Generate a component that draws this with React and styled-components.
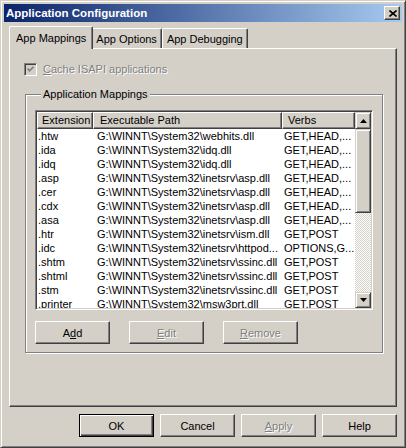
import React from "react";
import styled, { createGlobalStyle } from "styled-components";

const GlobalStyle = createGlobalStyle`
  html, body {
    margin: 0;
    padding: 0;
    background: #d4d0c8;
  }
  * {
    box-sizing: border-box;
  }
`;

const FONT = `"Liberation Sans", Arial, sans-serif`;
const COLUMNS = "56px 189px 73px";

const Window = styled.div`
  width: 406px;
  height: 448px;
  background: #d4d0c8;
  border: 1px solid;
  border-color: #d4d0c8 #404040 #404040 #d4d0c8;
  box-shadow: inset 1px 1px #fff, inset -1px -1px #808080;
  padding: 3px;
  display: flex;
  flex-direction: column;
  font-family: ${FONT};
  font-size: 11px;
  color: #000;
`;

const TitleBar = styled.div`
  height: 18px;
  flex: none;
  display: flex;
  align-items: center;
  justify-content: space-between;
  padding: 0 2px 0 2px;
  background: linear-gradient(to right, #0a246a, #a6caf0);
`;

const Title = styled.span`
  color: #fff;
  font-weight: bold;
  font-size: 11.5px;
  line-height: 14px;
  white-space: nowrap;
`;

const CloseButton = styled.div`
  width: 16px;
  height: 14px;
  background: #d4d0c8;
  border: 1px solid;
  border-color: #fff #404040 #404040 #fff;
  box-shadow: inset -1px -1px #808080;
  display: flex;
  align-items: center;
  justify-content: center;
  padding-left: 1px;
`;

const Body = styled.div`
  flex: 1;
  display: flex;
  flex-direction: column;
  padding: 4px 5px 7px 5px;
`;

const TabRow = styled.div`
  display: flex;
  align-items: flex-end;
  padding-left: 2px;
  height: 23px;
  position: relative;
  z-index: 1;
  margin-bottom: -1px;
`;

const Tab = styled.div`
  height: ${(p) => (p.$active ? "23px" : "20px")};
  margin: ${(p) => (p.$active ? "0 -2px" : "0 0 1px")};
  padding: ${(p) => (p.$active ? "5px 6px 0" : "4px 4px 0")};
  line-height: 13px;
  white-space: nowrap;
  background: #d4d0c8;
  border-top: 1px solid #fff;
  border-left: 1px solid #fff;
  border-right: 1px solid #404040;
  border-radius: 2px 2px 0 0;
  box-shadow: inset -1px 0 #808080;
  position: relative;
  z-index: ${(p) => (p.$active ? 2 : 1)};
`;

const Panel = styled.div`
  flex: 1;
  display: flex;
  flex-direction: column;
  border: 1px solid;
  border-color: #fff #404040 #404040 #fff;
  box-shadow: inset -1px -1px #808080;
  padding: 14px 13px 0 15px;
`;

const CheckRow = styled.label`
  display: flex;
  align-items: center;
  gap: 6px;
  height: 13px;
  margin-left: -1px;
`;

const CheckBox = styled.span`
  width: 13px;
  height: 13px;
  flex: none;
  background: #d4d0c8;
  border: 1px solid;
  border-color: #808080 #fff #fff #808080;
  box-shadow: inset 1px 1px #404040, inset -1px -1px #d4d0c8;
  display: flex;
  align-items: center;
  justify-content: center;
`;

const Disabled = styled.span`
  color: #808080;
  text-shadow: 1px 1px #fff;
  line-height: 13px;
`;

const Key = styled.span`
  text-decoration: underline;
`;

const GroupBox = styled.fieldset`
  margin: 12px 0 0;
  padding: 9px 9px 8px 9px;
  border: 1px solid #808080;
  box-shadow: inset 1px 1px #fff, 1px 1px #fff;
  min-width: 0;
`;

const Legend = styled.legend`
  margin-left: 6px;
  padding: 0 2px;
  line-height: 13px;
  background: #d4d0c8;
`;

const ListView = styled.div`
  height: 200px;
  display: flex;
  border: 1px solid;
  border-color: #808080 #fff #fff #808080;
  box-shadow: inset 1px 1px #404040, inset -1px -1px #d4d0c8;
  padding: 1px;
`;

const ListContent = styled.div`
  flex: 1;
  background: #fff;
  overflow: hidden;
  display: flex;
  flex-direction: column;
`;

const HeaderRow = styled.div`
  display: grid;
  grid-template-columns: ${COLUMNS};
  height: 17px;
  flex: none;
`;

const HeaderCell = styled.div`
  background: #d4d0c8;
  border: 1px solid;
  border-color: #fff #404040 #404040 #fff;
  box-shadow: inset -1px -1px #808080;
  padding-left: ${(p) => p.$pad}px;
  line-height: 14px;
  white-space: nowrap;
  overflow: hidden;
`;

const Row = styled.div`
  display: grid;
  grid-template-columns: ${COLUMNS};
  height: 14px;
  flex: none;
`;

const Cell = styled.div`
  padding-left: ${(p) => p.$pad}px;
  line-height: 14px;
  white-space: nowrap;
  overflow: hidden;
`;

const ScrollBar = styled.div`
  width: 16px;
  flex: none;
  display: flex;
  flex-direction: column;
`;

const ScrollButton = styled.div`
  height: ${(p) => p.$h}px;
  flex: none;
  background: #d4d0c8;
  border: 1px solid;
  border-color: #d4d0c8 #404040 #404040 #d4d0c8;
  box-shadow: inset 1px 1px #fff, inset -1px -1px #808080;
  display: flex;
  align-items: center;
  justify-content: center;
`;

const Track = styled.div`
  flex: 1;
  background-color: #d4d0c8;
  background-image: conic-gradient(#fff 25%, transparent 0 50%, #fff 0 75%, transparent 0);
  background-size: 2px 2px;
`;

const ButtonRow = styled.div`
  display: flex;
  gap: ${(p) => p.$gap}px;
  margin-top: ${(p) => p.$top || 0}px;
  justify-content: ${(p) => (p.$right ? "flex-end" : "flex-start")};
`;

const Button = styled.button`
  width: 75px;
  height: 23px;
  padding: 0;
  background: #d4d0c8;
  font-family: ${FONT};
  font-size: 11px;
  color: #000;
  border: 1px solid;
  border-color: ${(p) => (p.$default ? "#000" : "#fff #404040 #404040 #fff")};
  box-shadow: ${(p) =>
    p.$default
      ? "inset 1px 1px #fff, inset -1px -1px #404040, inset -2px -2px #808080"
      : "inset -1px -1px #808080"};
  ${(p) => p.disabled && "color: #808080; text-shadow: 1px 1px #fff;"}
`;

const Arrow = ({ down }) => (
  <svg width="7" height="4" viewBox="0 0 7 4">
    <polygon points={down ? "0,0 7,0 3.5,4" : "3.5,0 7,4 0,4"} fill="#000" />
  </svg>
);

const asp = "G:\\WINNT\\System32\\inetsrv\\asp.dll";
const ssinc = "G:\\WINNT\\System32\\inetsrv\\ssinc.dll";
const idq = "G:\\WINNT\\System32\\idq.dll";
const headVerbs = "GET,HEAD,...";

const mappings = [
  [".htw", "G:\\WINNT\\System32\\webhits.dll", headVerbs],
  [".ida", idq, headVerbs],
  [".idq", idq, headVerbs],
  [".asp", asp, headVerbs],
  [".cer", asp, headVerbs],
  [".cdx", asp, headVerbs],
  [".asa", asp, headVerbs],
  [".htr", "G:\\WINNT\\System32\\inetsrv\\ism.dll", "GET,POST"],
  [".idc", "G:\\WINNT\\System32\\inetsrv\\httpod...", "OPTIONS,G..."],
  [".shtm", ssinc, "GET,POST"],
  [".shtml", ssinc, "GET,POST"],
  [".stm", ssinc, "GET,POST"],
  [".printer", "G:\\WINNT\\System32\\msw3prt.dll", "GET,POST"],
];

export default function App() {
  return (
    <>
      <GlobalStyle />
      <Window>
        <TitleBar>
          <Title>Application Configuration</Title>
          <CloseButton>
            <svg width="8" height="7" viewBox="0 0 8 7">
              <path d="M0.5 0.5 L7.5 6.5 M7.5 0.5 L0.5 6.5" stroke="#000" strokeWidth="1.6" />
            </svg>
          </CloseButton>
        </TitleBar>
        <Body>
          <TabRow>
            <Tab $active>App Mappings</Tab>
            <Tab>App Options</Tab>
            <Tab>App Debugging</Tab>
          </TabRow>
          <Panel>
            <CheckRow>
              <CheckBox>
                <svg width="7" height="7" viewBox="0 0 7 7">
                  <path d="M0.5 2.5 L2.5 4.8 L6.5 0.8" fill="none" stroke="#808080" strokeWidth="1.8" />
                </svg>
              </CheckBox>
              <Disabled>
                <Key>C</Key>ache ISAPI applications
              </Disabled>
            </CheckRow>
            <GroupBox>
              <Legend>Application Mappings</Legend>
              <ListView>
                <ListContent>
                  <HeaderRow>
                    <HeaderCell $pad={4}>Extension</HeaderCell>
                    <HeaderCell $pad={6}>Executable Path</HeaderCell>
                    <HeaderCell $pad={5}>Verbs</HeaderCell>
                  </HeaderRow>
                  {mappings.map(([ext, path, verbs]) => (
                    <Row key={ext}>
                      <Cell $pad={1}>{ext}</Cell>
                      <Cell $pad={4}>{path}</Cell>
                      <Cell $pad={2}>{verbs}</Cell>
                    </Row>
                  ))}
                </ListContent>
                <ScrollBar>
                  <ScrollButton $h={17}>
                    <Arrow />
                  </ScrollButton>
                  <ScrollButton $h={84} />
                  <Track />
                  <ScrollButton $h={16}>
                    <Arrow down />
                  </ScrollButton>
                </ScrollBar>
              </ListView>
              <ButtonRow $gap={19} $top={11}>
                <Button>
                  A<Key>d</Key>d
                </Button>
                <Button disabled>
                  <Key>E</Key>dit
                </Button>
                <Button disabled>
                  <Key>R</Key>emove
                </Button>
              </ButtonRow>
            </GroupBox>
          </Panel>
          <ButtonRow $gap={6} $top={7} $right>
            <Button $default>OK</Button>
            <Button>Cancel</Button>
            <Button disabled>
              <Key>A</Key>pply
            </Button>
            <Button>Help</Button>
          </ButtonRow>
        </Body>
      </Window>
    </>
  );
}
